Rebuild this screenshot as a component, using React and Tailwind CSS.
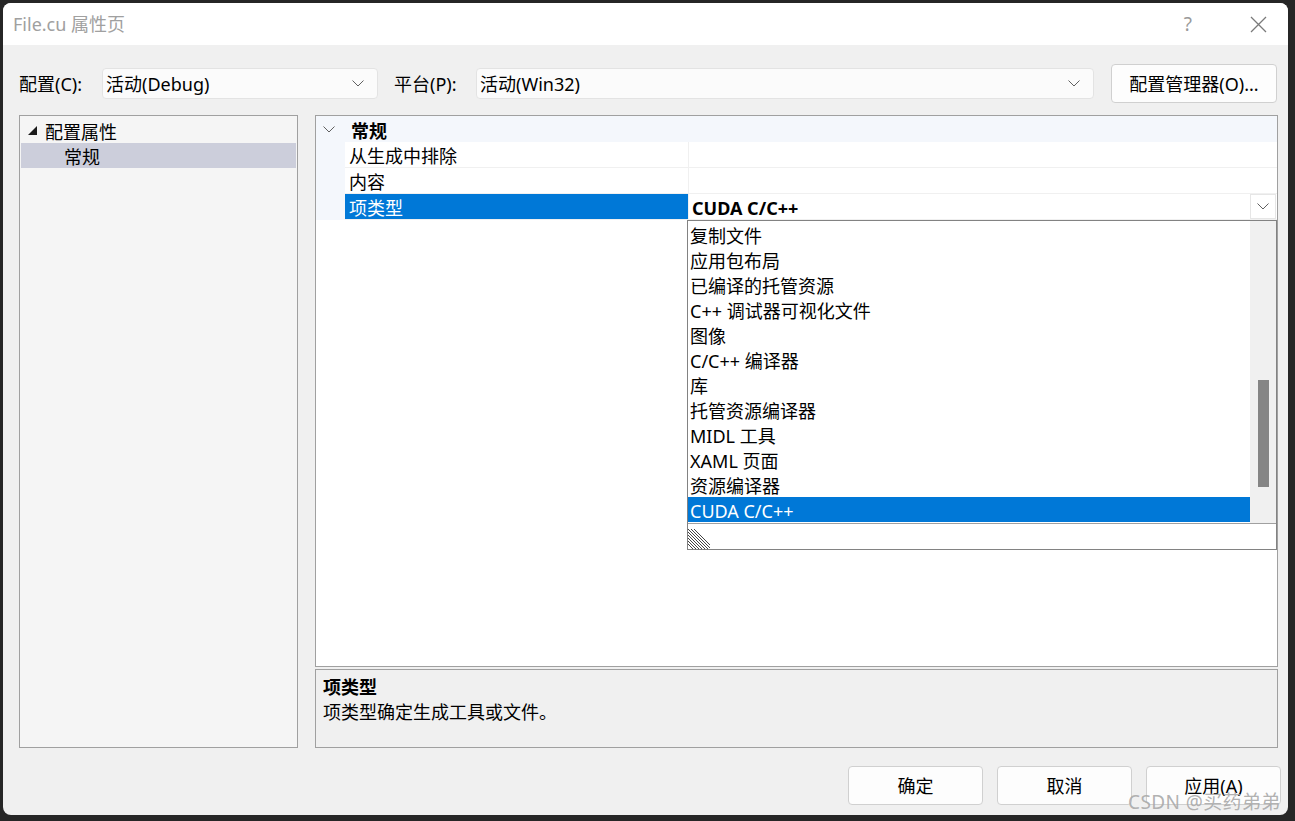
import React from "react";

const listItems = [
  "复制文件",
  "应用包布局",
  "已编译的托管资源",
  "C++ 调试器可视化文件",
  "图像",
  "C/C++ 编译器",
  "库",
  "托管资源编译器",
  "MIDL 工具",
  "XAML 页面",
  "资源编译器",
  "CUDA C/C++",
];

const Chevron = ({ className = "" }) => (
  <svg className={className} width="12" height="7" viewBox="0 0 12 7" fill="none">
    <polyline points="0.5,0.5 6,6 11.5,0.5" stroke="#606060" strokeWidth="1" />
  </svg>
);

const Combo = ({ width, text }) => (
  <div
    className={`${width} h-[31px] flex items-center justify-between pl-[3px] pr-[13px] bg-[#fbfbfb] border border-[#e3e3e3] rounded-[4px]`}
  >
    <span className="leading-[24px]">{text}</span>
    <Chevron />
  </div>
);

const Button = ({ children, width }) => (
  <div
    className={`${width} h-[39px] flex items-center justify-center bg-[#fdfdfd] border border-[#d0d0d0] rounded-[4px]`}
  >
    {children}
  </div>
);

const GridRow = ({ label, selected, value }) => (
  <div className="flex h-[26px]">
    <div className="w-[29px] bg-[#f4f7fc]" />
    <div
      className={`w-[343px] flex items-center pl-[4px] pt-[3px] border-b border-[#f0f0f0] ${
        selected ? "bg-[#0078d7] text-white border-[#0078d7]" : "bg-white"
      }`}
    >
      {label}
    </div>
    <div className="flex-1 flex items-center justify-between bg-white border-b border-l border-[#f0f0f0]">
      <span className="pl-[3px] pt-[3px] font-bold">{value}</span>
      {selected && (
        <div className="w-[26px] h-[25px] mr-[1px] flex items-center justify-center bg-white border border-[#e6e6e6]">
          <Chevron />
        </div>
      )}
    </div>
  </div>
);

const App = () => {
  return (
    <div className="relative w-[1295px] h-[821px] bg-[#262626] pl-[3px] pt-[3px] font-['Noto_Sans','Noto_Sans_CJK_SC',sans-serif] text-[18px] text-black leading-[26px]">
      <div className="w-[1285px] h-[812px] rounded-[8px] overflow-hidden bg-[#f0f0f0] flex flex-col">
        {/* title bar */}
        <div className="h-[42px] bg-white flex items-center justify-between shrink-0">
          <span className="pl-[10px] text-[#a0a0a0]">File.cu 属性页</span>
          <div className="flex items-center">
            <span className="text-[#9a9a9a] text-[19px] mr-[58px]">?</span>
            <svg className="mr-[21px]" width="17" height="17" viewBox="0 0 17 17">
              <path d="M1 1 L16 16 M16 1 L1 16" stroke="#7a7a7a" strokeWidth="1.3" />
            </svg>
          </div>
        </div>

        {/* config row */}
        <div className="flex items-center pl-[16px] mt-[19px] h-[39px] shrink-0">
          <span className="w-[83px]">配置(C):</span>
          <Combo width="w-[276px]" text="活动(Debug)" />
          <span className="w-[82px] ml-[16px]">平台(P):</span>
          <Combo width="w-[618px]" text="活动(Win32)" />
          <div className="ml-[17px]">
            <Button width="w-[166px]">配置管理器(O)...</Button>
          </div>
        </div>

        {/* panels */}
        <div className="flex pl-[16px] mt-[12px] h-[633px] shrink-0">
          <div className="w-[279px] h-full border border-[#a0a0a0] bg-[#f5f5f5] p-[1px] pt-[2px]">
            <div className="flex items-center h-[25px]">
              <svg className="ml-[7px] mr-[8px]" width="9" height="9" viewBox="0 0 9 9">
                <polygon points="9,0 9,9 0,9" fill="#1a1a1a" />
              </svg>
              <span className="pt-[2px]">配置属性</span>
            </div>
            <div className="h-[25px] bg-[#cccedb] flex items-center pl-[43px] pt-[2px]">常规</div>
          </div>

          <div className="ml-[17px] w-[963px] flex flex-col">
            <div className="relative h-[552px] border border-[#a0a0a0] bg-white">
              <div className="flex items-center h-[26px] bg-[#f4f7fc]">
                <Chevron className="ml-[7px] mr-[16px]" />
                <span className="font-bold pt-[3px]">常规</span>
              </div>
              <GridRow label="从生成中排除" />
              <GridRow label="内容" />
              <GridRow label="项类型" selected value="CUDA C/C++" />

              {/* dropdown popup */}
              <div className="absolute left-[371px] top-[104px] w-[590px] h-[330px] border border-[#828282] bg-white flex flex-col">
                <div className="flex h-[302px]">
                  <div className="flex-1 pt-[1px]">
                    {listItems.map((item, i) => (
                      <div
                        key={item}
                        className={`h-[25px] flex items-center pl-[2px] pt-[3px] leading-[25px] ${
                          i === listItems.length - 1 ? "bg-[#0078d7] text-white" : ""
                        }`}
                      >
                        {item}
                      </div>
                    ))}
                  </div>
                  <div className="w-[26px] bg-[#f0f0f0] pt-[159px] flex justify-center">
                    <div className="w-[11px] h-[107px] bg-[#858585]" />
                  </div>
                </div>
                <div className="flex-1 border-t border-[#a0a0a0] flex items-end">
                  <svg width="22" height="22" viewBox="0 0 22 22">
                    <path
                      d="M0 2 L20 22 M0 5 L17 22 M0 8 L14 22 M0 11 L11 22 M0 14 L8 22 M0 17 L5 22 M3 2 L22 21 M6 2 L22 18"
                      stroke="#444"
                      strokeWidth="1"
                    />
                  </svg>
                </div>
              </div>
            </div>

            <div className="mt-[2px] flex-1 border border-[#a0a0a0] bg-[#f0f0f0] pl-[7px] pt-[5px]">
              <div className="font-bold leading-[25px]">项类型</div>
              <div className="leading-[25px]">项类型确定生成工具或文件。</div>
            </div>
          </div>
        </div>

        {/* buttons */}
        <div className="flex justify-end pr-[7px] mt-[18px] gap-[14px]">
          <Button width="w-[135px]">确定</Button>
          <Button width="w-[135px]">取消</Button>
          <Button width="w-[135px]">应用(A)</Button>
        </div>
      </div>

      <div className="absolute left-[1128px] top-[789px] text-[#a8a8a8]/90 text-[19px] tracking-[0.4px]">CSDN @买药弟弟</div>
    </div>
  );
};

export default App;
